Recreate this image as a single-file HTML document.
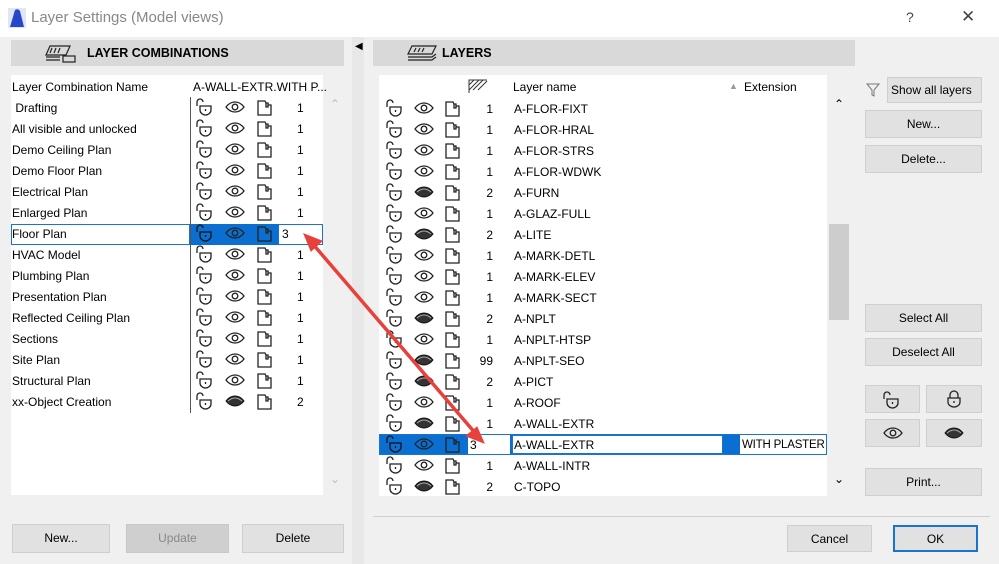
<!DOCTYPE html>
<html><head><meta charset="utf-8">
<style>
*{box-sizing:border-box;margin:0;padding:0}
body{width:999px;height:564px;overflow:hidden;background:#f0f0f0;font-family:"Liberation Sans",sans-serif;font-size:12px;color:#000;position:relative}
.a{position:absolute}
.title{left:0;top:0;width:999px;height:37px;background:#fff}
.hdr{background:#d9d9d9;height:26px;top:40px;font-weight:bold;font-size:12.5px;line-height:26px}
.list{background:#fff}
.row{position:absolute;height:21px;line-height:23px;white-space:nowrap}
.btn{position:absolute;background:#e1e1e1;border:1px solid #cfcfcf;text-align:center;font-size:12px}
svg.i{position:absolute;width:20px;height:20px}
.sel{background:#0a6fd0}
</style></head><body>
<svg width="0" height="0" style="position:absolute">
<defs>
<symbol id="lk" viewBox="0 0 20 20"><g fill="none" stroke="#222" stroke-width="1.3"><path d="M2 9V5a3 3 0 0 1 6 0"/><path d="M5 9h11v4c0 3-3 5-5.5 5S5 16 5 13z"/><path d="M10.5 12v2"/></g></symbol>
<symbol id="lkw" viewBox="0 0 20 20"><g fill="none" stroke="#111" stroke-width="1.3"><path d="M2 9V5a3 3 0 0 1 6 0"/><path d="M5 9h11v4c0 3-3 5-5.5 5S5 16 5 13z"/><path d="M10.5 12v2"/></g></symbol>
<symbol id="ey" viewBox="0 0 20 20"><g fill="none" stroke="#222" stroke-width="1.3"><path d="M1 10c3-4 6-5 9-5s6 1 9 5c-3 4-6 5-9 5s-6-1-9-5z"/><circle cx="10" cy="10" r="2.8"/></g></symbol>
<symbol id="ec" viewBox="0 0 20 20"><path d="M1 10c3-4 6-5 9-5s6 1 9 5c-3 4-6 5-9 5s-6-1-9-5z" fill="#333" stroke="#111"/><path d="M3 10c3-2.5 5-3 7-3s4 .5 7 3" fill="none" stroke="#aaa" stroke-width="1"/></symbol>
<symbol id="ly" viewBox="0 0 20 20"><g fill="none" stroke="#222" stroke-width="1.3"><path d="M3 4h7l1 2h2v2h3v10H3z"/><path d="M11 6v4h2V8"/></g></symbol>
</defs></svg>

<div class="a title"></div>
<svg class="a" style="left:8px;top:8px" width="18" height="20" viewBox="0 0 18 20"><rect width="18" height="20" fill="#dfe6f5"/><path d="M2 19 L7 2 Q10 0 12 3 L16 19z" fill="#2846c8"/></svg>
<div class="a" style="left:31px;top:9px;font-size:15px;color:#888">Layer Settings (Model views)</div>
<div class="a" style="left:906px;top:9px;font-size:14px;color:#444">?</div>
<div class="a" style="left:961px;top:7px;font-size:17px;color:#444">✕</div>

<div class="a" style="left:352px;top:37px;width:12px;height:527px;background:#e8e8e8"></div>
<div class="a" style="left:355px;top:41px;font-size:10px">◀</div>

<!-- LEFT -->
<div class="a hdr" style="left:11px;width:333px;padding-left:76px">LAYER COMBINATIONS</div>
<svg class="a" style="left:44px;top:44px" width="34" height="20" viewBox="0 0 34 20"><g fill="none" stroke="#222" stroke-width="1.2"><path d="M6 2h20l-4 9H2z"/><path d="M2 13h14M2 16h14M8 4l-2 5M12 4l-2 5M16 4l-2 5"/><rect x="19" y="12" width="12" height="6"/></g></svg>
<div class="a list" style="left:11px;top:75px;width:312px;height:420px"></div>
<div class="a" style="left:190px;top:97px;width:1px;height:316px;background:#555"></div>
<div class="row" style="left:12px;top:76px">Layer Combination Name</div>
<div class="row" style="left:193px;top:76px">A-WALL-EXTR.WITH P...</div>
<div class="a" style="left:330px;top:97px;color:#bbb;font-size:12px">&#8963;</div>
<div class="a" style="left:330px;top:472px;color:#bbb;font-size:12px">&#8964;</div>

<div class="a" style="left:11px;top:224px;width:179px;height:21px;border:1px solid #1a73d0"></div>
<div class="a sel" style="left:191px;top:224px;width:87px;height:21px"></div>
<div class="a" style="left:278px;top:224px;width:45px;height:21px;border:1px solid #1a73d0;background:#fff"></div>
<div id="L"></div>

<div class="btn" style="left:12px;top:524px;width:98px;height:29px;line-height:27px">New...</div>
<div class="btn" style="left:126px;top:524px;width:103px;height:29px;line-height:27px;background:#cfcfcf;color:#888;border-color:#c8c8c8">Update</div>
<div class="btn" style="left:242px;top:524px;width:102px;height:29px;line-height:27px">Delete</div>

<!-- RIGHT -->
<div class="a hdr" style="left:373px;width:482px;padding-left:69px">LAYERS</div>
<svg class="a" style="left:406px;top:44px" width="32" height="20" viewBox="0 0 32 20"><g fill="none" stroke="#222" stroke-width="1.2"><path d="M6 2h24l-4 8H2z"/><path d="M2 13h24l4-3M2 16h24l4-3M10 4l-2 4M14 4l-2 4M18 4l-2 4"/></g></svg>
<div class="a list" style="left:379px;top:75px;width:448px;height:421px"></div>
<div class="a" style="left:829px;top:224px;width:20px;height:96px;background:#cdcdcd"></div>
<div class="a" style="left:834px;top:97px;font-size:12px">&#8963;</div>
<div class="a" style="left:834px;top:472px;font-size:12px">&#8964;</div>
<svg class="a" style="left:467px;top:77px" width="22" height="18" viewBox="0 0 22 18"><g fill="none" stroke="#333" stroke-width="1"><path d="M2 16V3h18M2 8l5-5M2 13l10-10M6 13l10-10M11 13l9-9"/></g></svg>
<div class="row" style="left:513px;top:76px">Layer name</div>
<div class="a" style="left:729px;top:81px;font-size:9px;color:#999">▲</div>
<div class="row" style="left:744px;top:76px">Extension</div>
<div id="R"></div>

<div class="a" style="left:373px;top:516px;width:617px;height:1px;background:#cfcfcf"></div>

<svg class="a" style="left:865px;top:82px" width="16" height="16" viewBox="0 0 16 16"><path d="M2 2h12l-5 6v6l-2-1V8z" fill="none" stroke="#777"/></svg>
<div class="btn" style="left:887px;top:77px;width:95px;height:26px;line-height:25px;text-align:left;padding-left:3px">Show all layers <span style="font-size:9px">▶</span></div>
<div class="btn" style="left:865px;top:110px;width:117px;height:28px;line-height:27px">New...</div>
<div class="btn" style="left:865px;top:145px;width:117px;height:28px;line-height:27px">Delete...</div>
<div class="btn" style="left:865px;top:304px;width:117px;height:28px;line-height:27px">Select All</div>
<div class="btn" style="left:865px;top:338px;width:117px;height:28px;line-height:27px">Deselect All</div>
<div class="btn" style="left:865px;top:385px;width:55px;height:28px"><svg class="i" style="left:16px;top:4px"><use href="#lk"/></svg></div>
<div class="btn" style="left:926px;top:385px;width:56px;height:28px"><svg class="i" style="left:17px;top:3px" viewBox="0 0 20 20"><g fill="none" stroke="#222" stroke-width="1.3"><path d="M6 9V6a4 4 0 0 1 8 0v3"/><path d="M4 9h12v4c0 3-3 5-6 5s-6-2-6-5z"/><path d="M10 12v2"/></g></svg></div>
<div class="btn" style="left:865px;top:419px;width:55px;height:28px"><svg class="i" style="left:17px;top:3px"><use href="#ey"/></svg></div>
<div class="btn" style="left:926px;top:419px;width:56px;height:28px"><svg class="i" style="left:17px;top:3px"><use href="#ec"/></svg></div>
<div class="btn" style="left:865px;top:468px;width:117px;height:28px;line-height:27px">Print...</div>
<div class="btn" style="left:787px;top:525px;width:85px;height:27px;line-height:26px">Cancel</div>
<div class="btn" style="left:893px;top:525px;width:85px;height:27px;line-height:25px;border:2px solid #1a73d0">OK</div>

<script>
var L=[[" Drafting",1,0],["All visible and unlocked",1,0],["Demo Ceiling Plan",1,0],["Demo Floor Plan",1,0],["Electrical Plan",1,0],["Enlarged Plan",1,0],["Floor Plan",3,0,1],["HVAC Model",1,0],["Plumbing Plan",1,0],["Presentation Plan",1,0],["Reflected Ceiling Plan",1,0],["Sections",1,0],["Site Plan",1,0],["Structural Plan",1,0],["xx-Object Creation",2,1]];
var h="";
L.forEach(function(r,i){var y=97+i*21;var s=r[3];
h+='<div class="row" style="left:12px;top:'+y+'px">'+r[0].replace(/^ /,'&nbsp;')+'</div>';
h+='<svg class="i" style="left:195px;top:'+y+'px"><use href="#'+(s?'lkw':'lk')+'"/></svg>';
h+='<svg class="i" style="left:225px;top:'+y+'px"><use href="#'+(r[2]?'ec':'ey')+'"/></svg>';
h+='<svg class="i" style="left:255px;top:'+y+'px"><use href="#ly"/></svg>';
h+='<div class="row" style="'+(s?'left:282px':'left:297px')+';top:'+y+'px">'+r[1]+'</div>';});
document.getElementById('L').innerHTML=h;
var R=[["A-FLOR-FIXT",1,0],["A-FLOR-HRAL",1,0],["A-FLOR-STRS",1,0],["A-FLOR-WDWK",1,0],["A-FURN",2,1],["A-GLAZ-FULL",1,0],["A-LITE",2,1],["A-MARK-DETL",1,0],["A-MARK-ELEV",1,0],["A-MARK-SECT",1,0],["A-NPLT",2,1],["A-NPLT-HTSP",1,0],["A-NPLT-SEO",99,1],["A-PICT",2,1],["A-ROOF",1,0],["A-WALL-EXTR",1,1],["A-WALL-EXTR",3,0,1],["A-WALL-INTR",1,0],["C-TOPO",2,1]];
h="";
R.forEach(function(r,i){var y=97+i*21;var s=r[3];
if(s){h+='<div class="a sel" style="left:379px;top:'+(y+1)+'px;width:448px;height:21px;border:1px solid #1a73d0"></div>';
h+='<div class="a" style="left:468px;top:'+(y+2)+'px;width:42px;height:19px;background:#fff"></div>';
h+='<div class="a" style="left:512px;top:'+(y+2)+'px;width:211px;height:19px;background:#fff;border:1px solid #1a73d0"></div>';
h+='<div class="a" style="left:740px;top:'+(y+2)+'px;width:86px;height:19px;background:#fff"></div>';
h+='<div class="row" style="left:742px;top:'+(y+1)+'px;font-size:11.5px;letter-spacing:-0.2px">WITH PLASTER</div>';}
h+='<svg class="i" style="left:385px;top:'+(y+1)+'px"><use href="#'+(s?'lkw':'lk')+'"/></svg>';
h+='<svg class="i" style="left:414px;top:'+(y+1)+'px"><use href="#'+(r[2]?'ec':'ey')+'"/></svg>';
h+='<svg class="i" style="left:443px;top:'+(y+1)+'px"><use href="#ly"/></svg>';
h+='<div class="row" style="'+(s?'left:470px':'right:'+(999-493)+'px')+';top:'+(y+1)+'px">'+r[1]+'</div>';
h+='<div class="row" style="left:514px;top:'+(y+1)+'px">'+r[0]+'</div>';});
document.getElementById('R').innerHTML=h;
</script>
<svg class="a" style="left:0;top:0;z-index:5" width="999" height="564"><g stroke="#e8403a" stroke-width="3.5" fill="#e8403a" stroke-linecap="round"><line x1="312" y1="243" x2="476" y2="434"/><path d="M304 234 L322 241 L311 251z" stroke-width="1"/><path d="M484 443 L466 436 L477 427z" stroke-width="1"/></g></svg>
</body></html>
